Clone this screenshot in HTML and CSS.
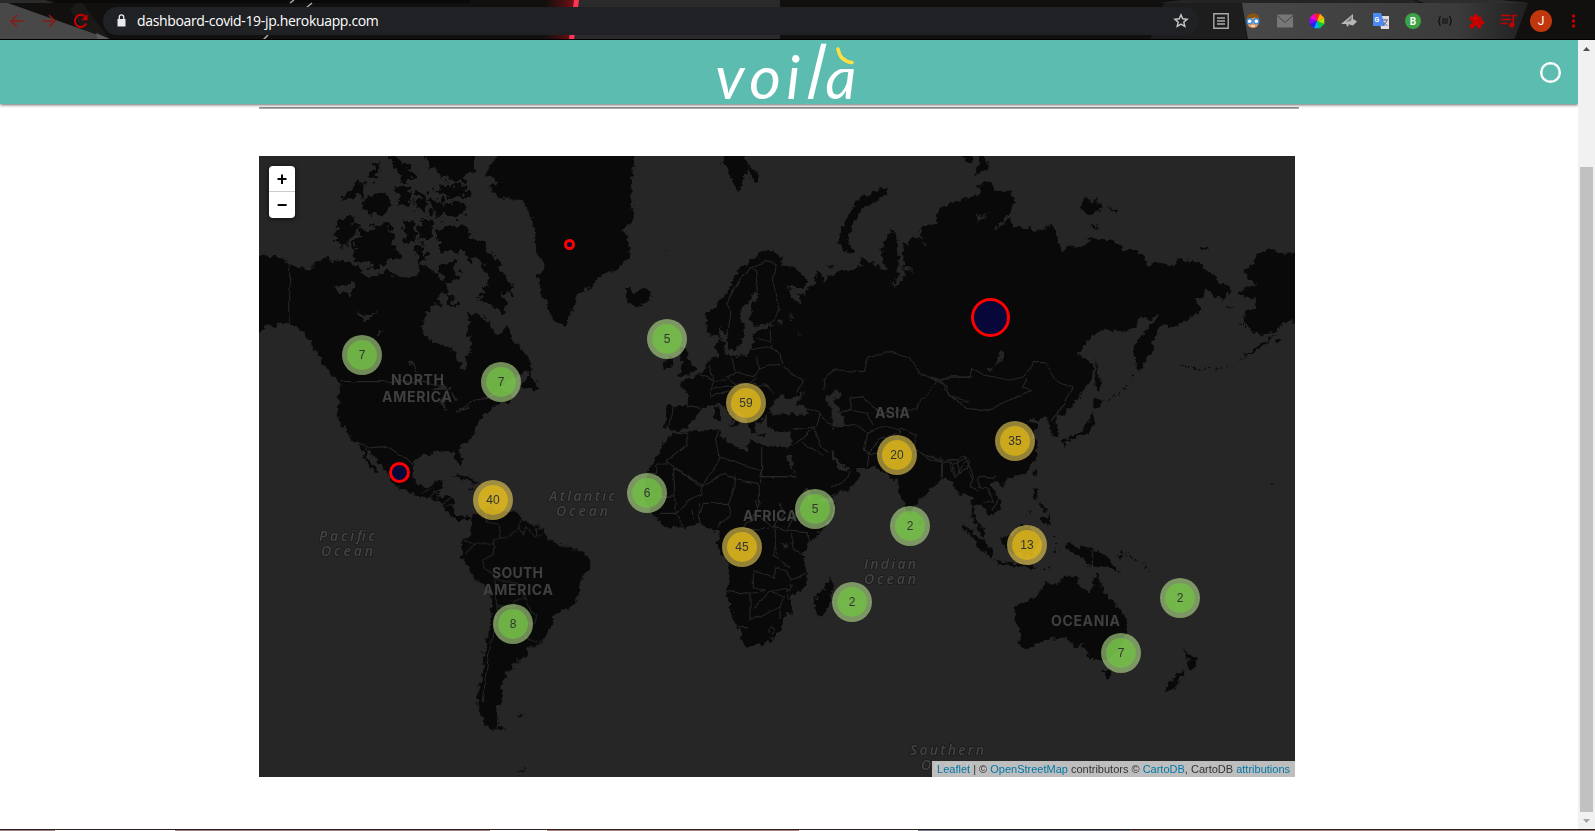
FILE: index.html
```html
<!DOCTYPE html>
<html lang="en">
<head>
<meta charset="utf-8">
<title>voilà</title>
<link rel="stylesheet" href="styles.css">
</head>
<body>
<div class="browser">
  <div class="toolbar">
    <svg class="theme" viewBox="0 0 1595 40" preserveAspectRatio="none">
      <defs>
        <linearGradient id="glow"><stop offset="0" stop-color="#5a0a0e" stop-opacity="0"/><stop offset="1" stop-color="#7a1016"/></linearGradient>
        <linearGradient id="fade"><stop offset="0" stop-color="#484848"/><stop offset=".75" stop-color="#3b3b3b"/><stop offset="1" stop-color="#202020"/></linearGradient>
      </defs>
      <path fill="#11100f" d="M0 0H1595V40H0z"/>
      <path fill="#1a1918" d="M80 0L110 40H90L70 10z"/>
      <path fill="#484848" d="M0 3H8L112 40H0z"/>
      <path fill="#5c5c5c" d="M96 33L112 40H98z"/>
      <path fill="#2b2a2a" d="M0 0H45L54 3H0z"/>
      <path fill="#0a0909" d="M54 0H470V3H54z"/>
      <path fill="url(#glow)" d="M548 0H575L570 40H543z"/>
      <path fill="#2b2a2a" d="M578 0H780V40H573z"/>
      <path fill="#ff3558" d="M574 0H579L574 40H569z"/>
      <path stroke="#aaa" stroke-width="1.5" d="M312 3L306 8M268 35L263 40M294 0L290 3"/>
      <path fill="#1d1d1d" d="M1164 3H1242L1247 40H1150z"/>
      <path fill="url(#fade)" d="M1242 3H1528L1514 40H1248z"/>
      <path fill="#242424" d="M1180 0H1414L1420 3H1160z"/>
      <path fill="#2d2d2d" d="M1416 0H1500L1530 3H1424z"/>
      <path fill="#000" d="M0 39H1595V40H0z"/>
    </svg>
    <div class="nav">
      <svg class="ico" viewBox="0 0 16 16"><path class="dim" d="M14.500 8H2M8 2L2 8l6 6"/></svg>
      <svg class="ico" viewBox="0 0 16 16"><path class="dim" d="M1.500 8H14M8 2l6 6-6 6"/></svg>
      <svg class="ico" viewBox="0 0 16 16"><path class="hot" d="M13.300 10.500A6 6 0 1 1 12.500 4"/><path fill="#c80000" d="M14.500 1v6.200H8.300z"/></svg>
    </div>
    <div class="address">
      <svg class="lock" viewBox="0 0 9 13"><path fill="#e8eaed" d="M.5 5h8v7.500h-8z"/><path fill="none" stroke="#e8eaed" stroke-width="1.300" d="M2.300 5V3a2.200 2.200 0 0 1 4.400 0v2"/></svg>
      <span class="url">dashboard-covid-19-jp.herokuapp.com</span>
      <svg class="star" viewBox="0 0 16 16"><path fill="none" stroke="#c8cacc" stroke-width="1.400" d="M8 1.800l1.700 4 4.400.4-3.300 2.900 1 4.300L8 11.100l-3.800 2.300 1-4.300L1.900 6.200l4.400-.4z"/></svg>
    </div>
    <div class="extensions">
      <svg viewBox="0 0 16 16"><path fill="none" stroke="#aaa" stroke-width="1.400" d="M.8.8h14.400v14.400H.8z"/><path stroke="#aaa" stroke-width="1.300" d="M4 5h8M4 8h8M4 11h8"/></svg>
      <svg viewBox="0 0 16 16"><circle cx="8" cy="9" r="6" fill="#e59a5a"/><path fill="#8a5413" d="M1.500 7C1 2 5 0 9 .5c4 0 6 3 5.300 6.500L10 4.500 5 5.500z"/><circle cx="4.700" cy="8.200" r="2.500" fill="#fff" stroke="#3a8ee0" stroke-width="1.400"/><circle cx="11.300" cy="8.200" r="2.500" fill="#fff" stroke="#3a8ee0" stroke-width="1.400"/><path stroke="#fff" d="M6 13h4"/></svg>
      <svg viewBox="0 0 16 16"><path fill="#777" d="M0 1.500h16v13H0z"/><path fill="none" stroke="#444" d="M0 2.500l8 7 8-7"/></svg>
      <svg viewBox="0 0 16 16"><path fill="#ff2020" d="M8 8L5 .7h6z"/><path fill="#ff00d0" d="M8 8L5 .7.7 5z"/><path fill="#9a00ff" d="M8 8L.7 5v6z"/><path fill="#2020ff" d="M8 8L.7 11 5 15.300z"/><path fill="#00b0ff" d="M8 8L5 15.300h6z"/><path fill="#00d040" d="M8 8l3 7.300 4.300-4.300z"/><path fill="#b0e800" d="M8 8l7.300 3V5z"/><path fill="#ffb000" d="M8 8l7.300-3L11 .7z"/></svg>
      <svg viewBox="0 0 16 16"><path fill="#b8b8b8" d="M0 11L12 1v5l4 2.500-4 4L8 11.500 6.500 14l-1.500-3z"/><path fill="#777" d="M5 9l6-6-1 5zM6.500 14l1-3 2 .5z"/></svg>
      <svg viewBox="0 0 16 16"><path fill="#ddd" d="M6 3h10v13H8z"/><path fill="#4a8af4" d="M0 0h8l4 13H0z"/><text x="1.500" y="8.500" class="g">G</text><path fill="none" stroke="#668" d="M9.500 7H15M12 6v1M14 7q-1 4-4 5M10.500 9l4 4"/></svg>
      <svg viewBox="0 0 16 16"><circle cx="8" cy="8" r="8" fill="#3ba345"/><text x="8" y="11.500" class="b">B</text></svg>
      <svg viewBox="0 0 16 16"><g fill="none" stroke="#111" stroke-width="1.200"><path d="M4 3.500Q2.500 3.500 2.500 5v1.500L1.500 8l1 1.500V11q0 1.500 1.500 1.500M12 3.500q1.500 0 1.500 1.500v1.500l1 1.500-1 1.500V11q0 1.500-1.500 1.500M5 6h6M5 8h6M5 10h6"/></g></svg>
      <svg viewBox="1 0 23 23"><path fill="#c80000" d="M20.500 11H19V7c0-1.100-.9-2-2-2h-4V3.500a2.500 2.500 0 0 0-5 0V5H4c-1.100 0-2 .9-2 2v3.800h1.500c1.500 0 2.700 1.200 2.700 2.700s-1.200 2.700-2.700 2.700H2V20c0 1.100.9 2 2 2h3.800v-1.500c0-1.500 1.200-2.700 2.700-2.700s2.700 1.200 2.700 2.700V22H17c1.100 0 2-.9 2-2v-4h1.500a2.500 2.500 0 0 0 0-5z"/></svg>
      <svg viewBox="0 0 16 16"><g stroke="#c80000" stroke-width="1.700" fill="none"><path d="M0 2.500h10M0 6.500h10M0 10.500h6.500M12.300 12V2.500H16"/></g><circle cx="10.700" cy="12" r="2.500" fill="#c80000"/></svg>
      <span class="avatar">J</span>
      <svg viewBox="0 0 16 16"><g fill="#c80000"><circle cx="8.500" cy="3" r="1.700"/><circle cx="8.500" cy="8" r="1.700"/><circle cx="8.500" cy="13" r="1.700"/></g></svg>
    </div>
  </div>

  <div class="viewport">
    <main class="page">
      <header class="brand">
        <div class="logo">voi<span class="tall">l</span><span class="last">à</span><svg class="accent" viewBox="0 0 18 18"><path d="M2 2Q4 14 16 15.500"/></svg></div>
        <span class="kernel"></span>
      </header>
      <div class="rule"></div>
      <section class="map">
        <svg class="tiles" viewBox="259 156 1036 621">
          <defs>
            <filter id="coast" color-interpolation-filters="sRGB" filterUnits="userSpaceOnUse" x="240" y="130" width="1080" height="670">
              <feTurbulence type="fractalNoise" baseFrequency=".18" numOctaves="3" seed="4"/>
              <feDisplacementMap in="SourceGraphic" scale="8" xChannelSelector="R" yChannelSelector="G"/>
            </filter>
            <filter id="arctic" color-interpolation-filters="sRGB" filterUnits="userSpaceOnUse" x="240" y="130" width="400" height="400">
              <feTurbulence type="fractalNoise" baseFrequency=".15" numOctaves="3" seed="7"/>
              <feDisplacementMap in="SourceGraphic" scale="17" xChannelSelector="R" yChannelSelector="G"/>
            </filter>
            <filter id="wobble" color-interpolation-filters="sRGB" filterUnits="userSpaceOnUse" x="240" y="130" width="1080" height="670">
              <feTurbulence type="fractalNoise" baseFrequency=".08" numOctaves="2" seed="9"/>
              <feDisplacementMap in="SourceGraphic" scale="5" xChannelSelector="R" yChannelSelector="G"/>
            </filter>
          </defs>
          <g class="land" filter="url(#arctic)">
            <g transform="translate(255 150) scale(.33333)">
              <path d="M650 258L690 290 730 330 740 370 780 405 765 435 740 420 755 480 750 495 700 460 660 440 690 420 700 390 685 340 630 315 610 300 560 300 545 280 550 235 580 225 640 230z"/>
              <path d="M505 0H670L660 60 615 95 560 85 530 50zM405 10L450 40 490 80 460 98 415 60zM540 110L642 103 638 138 555 142zM520 150L630 162 625 198 535 197zM260 145L325 90 325 125 285 152zM340 60L372 42 362 92zM318 150L390 128 412 170 370 202 328 172zM420 110L462 112 478 162 438 168zM485 118L512 130 512 192 488 180zM245 205L290 203 320 235 290 260 275 290 240 280zM325 240L375 222 408 218 415 270 440 325 400 330 380 350 310 338 288 280zM446 218L482 213 478 284 446 268zM493 213L538 213 518 268 493 262zM483 283L517 300 512 338 488 332zM575 430L612 460 588 470zM545 345L600 338 614 382 570 400z"/>
            </g>
          </g>
          <g class="land" filter="url(#coast)">
            <g transform="translate(255 150) scale(.33333)">
              <path d="M0 317L50 318 75 325 105 338 130 352 155 358 200 330 220 318 230 335 260 330 285 340 310 352 330 378 385 375 400 360 420 378 460 383 490 375 492 340 510 345 540 370 570 395 575 420 545 445 560 470 535 465 515 490 500 530 505 555 535 575 575 590 605 605 610 640 628 665 635 650 632 620 650 600 652 575 635 550 645 520 640 495 670 490 695 510 715 540 735 560 755 525 770 560 790 590 820 620 832 635 830 660 800 670 760 690 740 720 770 735 765 755 740 760 710 770 700 790 680 800 660 830 658 850 650 865 620 885 612 900 620 930 622 950 612 945 600 915 580 905 550 905 530 915 490 915 478 930 475 980 487 1005 515 1015 535 1012 540 992 566 988 558 1015 548 1025 555 1040 590 1042 597 1055 590 1075 605 1095 640 1098 652 1107 640 1110 625 1105 610 1112 580 1090 570 1070 545 1055 525 1045 500 1035 480 1035 440 1020 410 998 405 980 380 945 350 915 328 893 335 915 355 945 373 972 355 962 335 935 325 910 308 878 280 860 262 825 248 800 250 760 252 720 262 700 245 690 215 655 190 620 175 585 150 550 110 525 80 520 60 530 40 522 12 545 0 545z"/>
              <path d="M750 0H1143L1130 80 1125 150 1140 200 1100 240 1120 270 1122 320 1085 360 1040 372 1010 410 970 430 950 480 937 532 900 515 880 480 862 430 850 380 870 350 845 310 840 270 830 200 800 150 735 145 700 110 735 95 690 70 700 50z"/>
              <path d="M830 655L800 712 855 720 845 700 830 695zM1105 415L1125 410 1132 430 1175 410 1190 435 1180 455 1145 470 1120 455z"/>
            </g>
            <g transform="translate(255 440) scale(.33333)">
              <path d="M650 235L665 215 690 205 730 210 785 220 800 235 830 255 865 265 880 300 935 320 975 332 1008 355 1005 385 975 420 970 470 950 500 895 525 890 560 860 605 840 622 810 620 820 645 775 670 775 690 750 690 755 710 735 745 745 770 720 820 730 855 750 868 720 875 690 850 668 800 668 750 685 700 685 650 705 560 710 450 690 440 660 415 620 350 620 305 645 285z"/>
              <path d="M588 105L625 103 680 130 650 128 615 114zM790 825L815 818 800 830zM988 855L1002 866 998 862zM785 998L815 985 800 998zM645 143L655 150 645 150zM785 210L790 225z"/>
            </g>
            <g transform="translate(620 150) scale(.33333)">
              <path d="M257 490L290 465 320 430 340 385 350 365 390 330 430 305 460 305 490 325 480 345 520 350 550 375 565 400 545 415 505 410 490 400 510 420 515 440 530 460 545 455 525 430 555 435 560 420 585 405 590 365 605 370 610 395 625 380 660 360 700 360 730 345 715 320 760 340 800 365 785 330 785 295 805 250 830 245 835 300 835 360 850 345 845 310 850 270 870 290 870 265 900 265 920 300 905 255 900 230 955 225 945 210 960 180 1000 160 1050 150V980L1000 985 960 985 930 1020H835L830 985 800 975 770 950 720 952 690 948 660 935 640 905 625 905 640 930 660 965 640 1020H545L520 960 510 890 515 840 480 845 445 830 440 792 500 795 530 785 500 760 455 780 435 800 420 820 400 820 410 855 385 835 375 800 345 775 325 755 340 790 360 820 345 832 320 825 345 820 310 765 275 765 245 775 235 790 215 810 205 835 165 845 135 830 140 765 200 770 205 735 180 705 200 690 230 680 250 660 265 630 295 620 285 590 300 560 315 575 310 600 330 620 380 615 395 595 400 560 410 545 450 535 460 520 400 530 390 500 400 460 420 430 405 425 390 450 365 475 362 510 375 530 365 580 345 600 330 600 320 560 300 530 295 560 270 555 260 530z"/>
              <path d="M190 590L205 620 215 640 228 660 215 670 170 680 185 665 175 650 190 640 175 600zM130 640L150 618 162 625 155 650 130 660zM305 0H375L385 50 375 70 355 128 335 85 330 60 310 40zM385 45L400 55 420 85 405 100 390 80zM780 115L800 118 798 132 770 155 735 170 710 200 690 240 685 275 705 310 670 305 655 285 665 240 685 200 710 150zM622 345L640 342 640 352 630 357zM810 235h12v8h-12zM285 770L297 770 297 810 285 805zM415 853h25v5h-25zM138 300h6v3z"/>
            </g>
            <g transform="translate(620 400) scale(.33333)">
              <path d="M165 100L200 95 300 88 305 110 345 140 380 155 390 120 430 135 490 145 515 140 510 165 495 165 520 215 545 260 550 270 560 300 640 310 645 330 620 370 570 430 550 465 560 520 560 555 510 595 515 635 490 655 480 690 440 730 380 743 368 730 365 700 340 660 330 610 315 580 330 530 325 490 300 460 290 430 300 400 270 385 235 375 145 385 100 345 70 290 80 220 105 180 130 130 155 105z"/>
              <path d="M515 165L530 190 550 230 565 265 580 300 620 295 690 265 720 230 705 205 685 200 690 215 650 205 625 165 620 100H530zM620 140L640 160 665 195 690 205 770 203 800 225 820 240 835 230 838 280 860 330 875 340 895 300 930 270 960 240 990 235 1000 260 1020 285 1035 280 1050 290V100H620zM632 532L640 560 625 620 605 650 585 640 590 580 615 565zM897 345L908 365 897 375z"/>
            </g>
            <g transform="translate(930 150) scale(.33333)">
              <path d="M0 225L25 225 20 190 60 160 130 140 150 130 145 110 170 88 185 95 195 125 240 125 252 150 245 180 185 250 240 205 250 230 300 235 330 248 350 228 380 240 385 280 400 305 415 285 470 290 475 260 510 270 550 270 580 300 620 300 645 320 655 350 690 335 740 350 740 328 800 335 860 380 865 400 900 415 880 450 855 435 825 415 820 440 795 445 812 485 735 530 690 525 670 570 672 595 625 665 612 635 615 580 640 550 670 520 690 490 660 510 630 500 605 545 530 540 500 545 440 612 490 640 485 690 430 765 385 800 375 815 387 855 365 860 355 820 345 800 325 815 305 800 290 815 325 825 305 860 315 880 322 920 310 940 250 975 200 990H0z"/>
              <path d="M497 625L508 690 518 700 500 730 495 690zM490 742L500 740 522 762 490 780zM488 785L495 820 480 852 450 858 410 872 402 892 393 872 440 855 470 825zM310 965L322 955 315 980zM1140 320L1060 310 1020 297 985 310 965 345 937 360 965 395 980 405 950 410 925 430 945 445 980 445 975 470 940 490 945 520 975 550 1010 555 1040 540 1075 512 1140 525zM1040 545L1000 590 950 615 915 640 955 605 1010 570zM455 150L475 145 480 158 490 148 515 160 515 180 475 192 455 180zM530 168L568 182 555 190zM485 220L505 235 485 235zM808 300L825 288 838 298zM90 10L130 18 130 40 110 38zM150 10L180 45 165 60 133 75 145 45zM890 465L912 472 900 475zM930 525h12v6h-12zM1037 570L1055 570 1045 580z"/>
              <path class="dots" d="M520 757L570 730M580 720L615 675M755 643L800 657 850 657 890 650"/>
            </g>
            <g transform="translate(930 440) scale(.33333)">
              <path d="M320 30V60L290 95 240 115 215 130 190 125 185 140 215 185 210 210 180 228 165 205 150 195 135 190 130 220 145 250 165 270 165 292 145 275 125 230 125 175 110 150 95 168 80 120 40 115 0 145V0H320z"/>
              <path d="M95 258L120 265 185 330 187 355 160 335zM187 358L230 365 330 380 300 384 210 374zM213 290L240 295 280 248 330 290 310 350 230 330zM308 145L325 148 322 180 312 175zM325 185L350 205 345 222zM325 240L360 225 360 255 340 250zM400 318L425 310 440 325 465 320 520 340 545 365 570 397 520 380 475 378 465 350 430 340zM255 500L320 470 345 430 385 435 400 410 450 410 440 435 480 458 490 420 498 400 525 460 585 525 592 575 565 625 540 660 480 660 460 615 440 625 410 590 345 600 285 627 265 610 270 580 253 540zM518 690L550 690 535 720zM760 622L785 650 805 655 790 690 775 690 775 660zM767 690L735 745 710 755 708 740 745 700zM212 130L228 130 215 145zM550 355L585 340 575 355zM1022 130L1032 135 1025 138z"/>
              <path class="dots" d="M575 330L600 350 640 375 665 398M285 230L305 205M340 392L370 378M370 290L380 310M370 333L395 333"/>
            </g>
          </g>
          <g class="water" filter="url(#coast)">
            <path transform="translate(255 150) scale(.33333)" d="M240 410L300 400 285 440 270 425 250 430zM305 490L340 495 370 480 335 515zM460 628L472 635 485 670 470 650zM525 722L560 700 590 715 570 722zM560 735L572 735 570 782 560 770zM585 725L615 750 600 755zM600 785L650 760 625 782zM355 555L390 540 370 555zM655 370L672 365 670 390zM620 370L650 350 640 410 610 420z"/>
            <path transform="translate(620 150) scale(.33333)" d="M452 780L465 750 485 732 505 745 515 745 555 725 545 745 530 760 555 770 570 785 545 797 510 785 480 792zM615 745L640 725 665 725 660 745 640 750 655 780 670 790 672 830 640 835 635 790zM835 360L850 348 852 385 825 412 805 405 830 395zM850 350L870 348 882 380 870 360zM470 510L490 515 480 530zM510 490L520 510 510 510zM530 540L545 560 535 555z"/>
            <path transform="translate(620 400) scale(.33333)" d="M487 428L505 425 500 445 485 445zM465 440L475 470 468 460zM508 540L514 570 508 570z"/>
            <path transform="translate(930 150) scale(.33333)" d="M215 600L222 602 215 630 180 662 168 660 195 645zM135 190L150 200 180 185 155 207 145 220z"/>
            <path transform="translate(930 440) scale(.33333)" d="M440 625L460 605 455 635z"/>
          </g>
          <g class="borders" filter="url(#wobble)">
            <path transform="translate(255 150) scale(.33333)" d="M104 335V523L150 550M260 695H515L560 710M600 785L660 750 700 745 740 710M308 880L350 893 395 890 430 915 450 920 475 945"/>
            <path transform="translate(255 440) scale(.33333)" d="M500 160L530 150M525 175L540 155 548 180M555 195L590 172M570 200L597 195M690 210L695 245 730 255 735 295 715 300 712 340 680 360 690 390 715 400M735 295L760 290 795 265M795 235L790 260 805 285 815 255M815 260L840 290 865 280M845 262V285M625 305L665 310 630 345M665 305L712 315M715 400L720 470 730 500 715 570 700 650 690 720 685 790M720 420L790 430 795 460 815 475 775 485 780 500 730 500M815 475L830 515 845 525 840 550 815 550M810 590L850 605M725 830V870"/>
            <path transform="translate(620 150) scale(.33333)" d="M320 555L330 480 320 460 355 400 395 350 410 360 415 425M395 350L435 335 465 340 460 400 480 480 450 525M395 600L440 590 480 605 485 640 435 655 415 660M410 565L450 575M450 540L455 595M335 620L345 665 400 680 415 660 410 620M345 665L320 680 345 700 390 700 410 680M265 640L280 690 320 690M230 670L280 690 270 740 330 720M430 700L460 730M485 650L550 690 530 730M160 770L150 830M200 770L240 775M270 720L310 710 400 700 440 710M550 770L600 790 590 830 515 840M600 790L625 820 680 830 700 820 740 850 730 900 750 910 745 950M580 830L605 890 625 910M515 890L545 870 580 835M550 880L610 915M615 720L610 690 650 660 730 665 740 625 800 605 870 620 900 670 950 690 920 740 900 745 890 780 840 780 790 790 755 770 730 740 690 745V780L740 790 760 825M690 780L665 790M740 850L800 830 840 840 830 870M840 830L890 855 880 900 930 920 1000 940 1040 920M950 690L1050 680M950 690L980 710 990 740 1050 755M830 850L780 870 740 910H780M160 845L200 850 205 885 140 930V945H110M300 840L290 870 300 920 250 1005 160 955M300 920L425 960V890M425 1000V940L420 980H525M110 945V970L75 970"/>
            <path transform="translate(620 400) scale(.33333)" d="M160 205L165 290 120 293M140 185L245 260 315 220 350 240 418 250V310L400 350M345 225V260L325 310 250 310M245 260V285L200 305 165 340M425 230H530M165 290V330M120 340L165 340 190 375M215 330L225 370M235 310L240 375M250 310L240 340M325 310L330 350 300 370 290 385M410 300L410 350 380 370 370 385 420 390 460 380 490 340 480 310M420 350L460 380 500 390 525 350 560 300M460 380L470 430 460 470 510 500M500 390L565 395 565 440M510 400L520 450 550 465M315 575L400 580 435 570 400 560V520M400 510L460 535 470 500 500 510 510 540 560 520M390 580V665M385 680L355 680M390 660L430 645 480 620 490 590 450 575 400 625M450 575L500 565 505 600M480 620V655M443 690L455 680 465 690 455 700 443 690M630 265L680 240 690 215M610 300L660 280M900 160L930 180 965 185M965 170L970 220M980 180L1010 175 1020 220 1050 200"/>
            <path transform="translate(930 150) scale(.33333)" d="M0 680L30 690 60 680 120 682 125 655 160 675 240 690 280 680 310 650 310 635 345 635 375 690 430 710 410 745 405 765M30 690L60 740 110 772 180 782 240 750 305 720 275 710 290 685M405 765L360 810M0 920L40 940 100 915 120 930M40 940V985M70 940L75 985M120 930L110 960 130 990"/>
            <path transform="translate(930 440) scale(.33333)" d="M40 70L35 120M60 70L75 110 110 60M110 60L130 110 120 140 145 150M145 110L190 115 200 105M145 110L150 140 175 145 190 185 160 190M190 120L210 170 185 210M487 330V380"/>
          </g>
          <g class="continents">
            <text x="391" y="385" textLength="53">NORTH</text><text x="382" y="402" textLength="70">AMERICA</text>
            <text x="492" y="578" textLength="51">SOUTH</text><text x="483" y="595" textLength="70">AMERICA</text>
            <text x="743" y="521" textLength="54">AFRICA</text><text x="875" y="418" textLength="35">ASIA</text><text x="1051" y="626" textLength="69">OCEANIA</text>
          </g>
          <g class="oceans">
            <text x="319" y="541" textLength="56">Pacific</text><text x="321" y="556" textLength="52">Ocean</text>
            <text x="549" y="501" textLength="66">Atlantic</text><text x="556" y="516" textLength="52">Ocean</text>
            <text x="864" y="569" textLength="52">Indian</text><text x="864" y="584" textLength="52">Ocean</text>
            <text x="910" y="755" textLength="74">Southern</text><text x="921" y="770" textLength="52">Ocean</text>
          </g>
          <g class="cases">
            <circle cx="569.500" cy="244.500" r="4"/><circle cx="399.500" cy="472.500" r="9"/><circle cx="990.500" cy="317.500" r="18"/>
          </g>
          <g class="cluster small">
            <g transform="translate(362 355)"><circle r="20"/><circle r="15"/><text y="4">7</text></g>
            <g transform="translate(501 382)"><circle r="20"/><circle r="15"/><text y="4">7</text></g>
            <g transform="translate(667 339)"><circle r="20"/><circle r="15"/><text y="4">5</text></g>
            <g transform="translate(647 493)"><circle r="20"/><circle r="15"/><text y="4">6</text></g>
            <g transform="translate(815 509)"><circle r="20"/><circle r="15"/><text y="4">5</text></g>
            <g transform="translate(910 526)"><circle r="20"/><circle r="15"/><text y="4">2</text></g>
            <g transform="translate(852 602)"><circle r="20"/><circle r="15"/><text y="4">2</text></g>
            <g transform="translate(1180 598)"><circle r="20"/><circle r="15"/><text y="4">2</text></g>
            <g transform="translate(1121 653)"><circle r="20"/><circle r="15"/><text y="4">7</text></g>
            <g transform="translate(513 624)"><circle r="20"/><circle r="15"/><text y="4">8</text></g>
          </g>
          <g class="cluster medium">
            <g transform="translate(746 403)"><circle r="20"/><circle r="15"/><text y="4">59</text></g>
            <g transform="translate(493 500)"><circle r="20"/><circle r="15"/><text y="4">40</text></g>
            <g transform="translate(742 547)"><circle r="20"/><circle r="15"/><text y="4">45</text></g>
            <g transform="translate(897 455)"><circle r="20"/><circle r="15"/><text y="4">20</text></g>
            <g transform="translate(1015 441)"><circle r="20"/><circle r="15"/><text y="4">35</text></g>
            <g transform="translate(1027 545)"><circle r="20"/><circle r="15"/><text y="4">13</text></g>
          </g>
        </svg>
        <div class="zoom"><span class="in">+</span><span>−</span></div>
        <div class="credits"><a>Leaflet</a> | © <a>OpenStreetMap</a> contributors © <a>CartoDB</a>, CartoDB <a>attributions</a></div>
      </section>
    </main>
    <div class="scrollbar">
      <svg viewBox="0 0 17 17"><path fill="#505050" d="M5 11l3.500-4 3.500 4z"/></svg>
      <span class="thumb"></span>
      <svg viewBox="0 0 17 17"><path fill="#a3a3a3" d="M5 7l3.500 4L12 7z"/></svg>
    </div>
  </div>
  <div class="edge"></div>
</div>
</body>
</html>
```

FILE: styles.css
```css
* { box-sizing: border-box; }
body { margin: 0; background: #fff; font-family: "Liberation Sans", Arial, sans-serif; overflow: hidden; }
.browser { display: flex; flex-direction: column; width: 1595px; height: 831px; }

.toolbar { position: relative; display: flex; align-items: center; height: 40px; }
.theme { position: absolute; inset: 0; width: 1595px; height: 40px; }
.nav { position: relative; display: flex; gap: 16px; width: 103px; padding: 2px 0 0 9px; }
.ico { width: 16px; height: 16px; }
.dim { fill: none; stroke: #8c1a17; stroke-width: 1.5; }
.hot { fill: none; stroke: #c80000; stroke-width: 2; }
.address { position: relative; display: flex; align-items: center; width: 1096px; height: 28px; margin-top: 2px; padding: 0 10px 0 14px; border-radius: 14px; background: #202124; }
.lock { width: 9px; height: 13px; margin-bottom: 2px; }
.url { flex: 1; margin-left: 11px; color: #fff; font: 14px/20px "Open Sans", "Noto Sans", sans-serif; letter-spacing: -.34px; }
.star { width: 16px; height: 16px; }
.extensions { position: relative; display: flex; align-items: center; gap: 16px; margin: 2px 0 0 14px; }
.extensions svg { flex: none; width: 16px; height: 16px; }
.avatar { display: flex; align-items: center; justify-content: center; width: 22px; height: 22px; margin: 0 -3px; border-radius: 50%; background: #c1370d; color: #fff; font: 12px Roboto, sans-serif; }
.g { fill: #fff; font: bold 7px Roboto, sans-serif; }
.b { fill: #fff; font: bold 10px Roboto, sans-serif; text-anchor: middle; }

.viewport { display: flex; height: 789px; }
.page { width: 1578px; }
.brand { display: grid; grid-template-columns: 1fr auto 1fr; height: 64px; background: #5cbcb0; box-shadow: 0 1px 3px rgba(0,0,0,.6); }
.logo { position: relative; grid-column: 2; height: 64px; margin-right: 1px; color: #fff; font: italic 400 61px/72px Lato, sans-serif; letter-spacing: 5.5px; white-space: nowrap; }
.tall { display: inline-block; transform: scaleY(1.23) skewX(-10deg); transform-origin: 50% 79%; }
.last { background: linear-gradient(transparent 0 41%, #fff 41%); background-clip: text; -webkit-background-clip: text; color: transparent; }
.accent { position: absolute; top: 7px; right: 8px; width: 18px; height: 18px; fill: none; stroke: #ffe040; stroke-width: 3.6; stroke-linecap: round; }
.kernel { grid-column: 3; justify-self: end; width: 21px; height: 21px; margin: 22px 17px 0 0; border: 2.5px solid #fff; border-radius: 50%; box-shadow: inset 0 0 0 .5px #fff; }
.rule { width: 1040px; height: 2px; margin: 3px 0 0 259px; border: 1px solid #aaa; border-top-color: #888; }
.map { position: relative; width: 1036px; height: 621px; margin: 47px 0 0 259px; background: #262626; overflow: hidden; }
.tiles { display: block; width: 1036px; height: 621px; }
.land { fill: #090909; }
.dots { fill: none; stroke: #090909; stroke-width: 4; stroke-dasharray: 8 9; }
.water { fill: #262626; }
.borders { fill: none; stroke: #262626; stroke-width: 3.3; stroke-linejoin: round; }
.continents { fill: #404040; font: 700 14px Inter, sans-serif; }
.oceans { fill: #444; stroke: #1a1a1a; stroke-width: 1.6px; paint-order: stroke; font: italic 600 14px "Open Sans", sans-serif; }
.cases circle { fill: #00f; fill-opacity: .2; stroke: #f00; stroke-width: 3; }
.cluster text { fill: #333; font: 12px "Liberation Sans", Arial, sans-serif; text-anchor: middle; }
.small circle { fill: rgba(181,226,140,.6); }
.small circle + circle { fill: rgba(110,204,57,.6); }
.medium circle { fill: rgba(241,211,87,.6); }
.medium circle + circle { fill: rgba(240,194,12,.6); }
.zoom { position: absolute; top: 10px; left: 10px; width: 26px; border-radius: 4px; background: #fff; box-shadow: 0 1px 5px rgba(0,0,0,.65); font: bold 18px/26px "Liberation Sans", Arial, sans-serif; text-align: center; color: #000; }
.zoom span { display: block; height: 26px; }
.zoom .in { border-bottom: 1px solid #ccc; }
.credits { position: absolute; right: 0; bottom: 0; height: 16px; padding: 0 5px; background: rgba(255,255,255,.7); color: #333; font: 11px/16px "Liberation Sans", Arial, sans-serif; white-space: nowrap; }
.credits a { color: #0078a8; }

.scrollbar { display: flex; flex-direction: column; align-items: center; width: 17px; background: #f1f1f1; }
.scrollbar svg { width: 17px; height: 17px; }
.thumb { width: 13px; height: 645px; margin: 110px 0 0; background: #c1c1c1; }
.edge { height: 2px; border-top: 1px solid #2a2020; background: linear-gradient(90deg, #a08080 0 55px, #fff 55px 175px, #a08080 175px 490px, #fff 490px 547px, #b08080 547px 799px, #fff 799px 918px, #778 918px 1130px, #b08080 1130px); }
```
